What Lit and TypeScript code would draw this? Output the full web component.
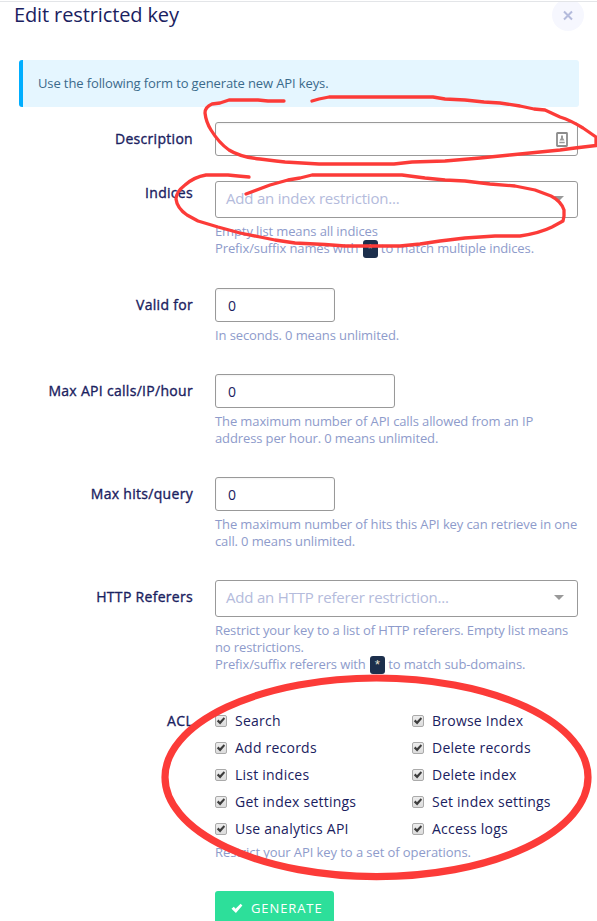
import { LitElement, html, css, svg, nothing } from "lit";
import { customElement } from "lit/decorators.js";

const PERMISSIONS = [
  "Search", "Browse Index",
  "Add records", "Delete records",
  "List indices", "Delete index",
  "Get index settings", "Set index settings",
  "Use analytics API", "Access logs",
];

const tick = svg`<path d="M1 5.2 3.1 3.3 4.7 5.2 9.3 0.6 10.9 2.2 5 9.2Z"></path>`;

@customElement("app-root")
export class AppRoot extends LitElement {
  static styles = css`
    :host {
      display: block;
      position: relative;
      width: 597px;
      height: 921px;
      overflow: hidden;
      background: #fff;
      color: #1a2160;
      font: 14px/20px "Open Sans", "Noto Sans", sans-serif;
    }
    * { box-sizing: border-box; }
    .sheet { margin-top: 1px; border-top: 1px solid #e3e5e8; }
    header {
      height: 58px;
      display: flex;
      justify-content: space-between;
      align-items: flex-start;
      padding: 0 13px 0 14px;
    }
    h1 { margin: 0; font-size: 20px; letter-spacing: -0.12px; line-height: 26px; font-weight: 400; white-space: nowrap; }
    .close { width: 32px; height: 29px; display: block; }
    .info {
      margin: 0 18px 15px 19px;
      height: 47px;
      padding-left: 15px;
      border-left: 4px solid #00aeff;
      border-radius: 3px;
      background: #e5f6ff;
      color: #3b6a8b;
      font-size: 13px;
      letter-spacing: -0.12px;
      line-height: 47px;
      white-space: nowrap;
    }
    .row { display: grid; grid-template-columns: 193px 363px; column-gap: 22px; white-space: nowrap; }
    .label {
      text-align: right;
      letter-spacing: 0.3px;
      -webkit-text-stroke: 0.35px currentColor;
      height: 20px;
      margin-top: 7px;
    }
    .label.high { margin-top: 2px; }
    .label.low { margin-top: 4px; }
    .description { height: 59px; }
    .indices { height: 107px; }
    .valid { height: 86px; }
    .calls, .hits { height: 103px; }
    .referers { height: 127px; }
    .acl { height: 184px; }
    .input {
      height: 34px;
      border: 1px solid #999;
      border-radius: 3px;
      padding: 1px 12px 0;
      display: flex;
      align-items: center;
      box-shadow: inset 0 1px 2px #0000000d;
    }
    .small { width: 120px; }
    .medium { width: 180px; }
    .full { padding: 0 9px 0 12px; justify-content: flex-end; }
    .select {
      height: 37px;
      border: 1px solid #999;
      border-radius: 3px;
      padding: 0 13px 3px 10px;
      display: flex;
      align-items: center;
      justify-content: space-between;
      color: #b4bbdc;
      font-size: 15px;
      letter-spacing: -0.2px;
    }
    .hint { color: #8e9bcb; font-size: 13px; letter-spacing: -0.115px; line-height: 17px; margin-top: 5px; }
    code {
      display: inline-block;
      width: 15px; height: 18px;
      margin: 0 0 -1px 1px;
      border-radius: 3px;
      background: #1c2f4c;
      color: #e8e4d0;
      font: 13px/20px "Liberation Mono", monospace;
      text-align: center;
      vertical-align: top;
    }
    .options { display: grid; grid-template-columns: 197px 1fr; grid-auto-rows: 27px; letter-spacing: 0.23px; }
    .option { display: flex; align-items: center; gap: 8px; }
    .box {
      width: 12px; height: 12px;
      border: 1px solid #aaa;
      border-radius: 2px;
      background: linear-gradient(#ededed, #dcdcdc);
      display: flex;
    }
    .box svg { width: 10px; height: 10px; fill: #3d3d3d; }
    .acl .hint { margin-top: 2px; letter-spacing: -0.08px; }
    .button {
      margin-left: 215px;
      width: 119px; height: 36px;
      border-radius: 3px;
      background: #2ddf9a;
      color: #fff;
      display: flex;
      align-items: center;
      padding: 0 0 2px 15px;
      gap: 7px;
      font-size: 13px;
      letter-spacing: 0.9px;
    }
    .button svg { width: 14px; height: 11px; fill: #fff; }
    .marks { position: absolute; inset: 0; fill: none; stroke: #fc3b38; pointer-events: none; }
  `;

  private row(kind: string, label: string, control: unknown, hint: unknown = nothing, align = "") {
    return html`<div class="row ${kind}">
      <div class="label ${align}">${label}</div>
      <div>${control}${hint === nothing ? nothing : html`<div class="hint">${hint}</div>`}</div>
    </div>`;
  }

  private select(text: string) {
    return html`<div class="select"><span>${text}</span>
      <svg width="10" height="5"><path d="M0 0H10L5 5Z" fill="#999"></path></svg></div>`;
  }

  render() {
    return html`
      <div class="sheet">
        <header>
          <h1>Edit restricted key</h1>
          <svg class="close" viewBox="0 0 32 29">
            <circle cx="16" cy="13" r="16" fill="#f6f7fe"></circle>
            <path d="M12 9.5 20 17.5M20 9.5 12 17.5" stroke="#b4bbdc" stroke-width="2"></path>
          </svg>
        </header>
        <div class="info">Use the following form to generate new API keys.</div>
        ${this.row("description", "Description", html`<div class="input full">
          <svg width="12" height="15" viewBox="0 0 12 15">
            <rect x="1" y="1" width="10" height="13" rx="0.5" fill="#fff" stroke="#8c8c8c" stroke-width="1.8"></rect>
            <path d="M5 3.5H7V6L8.500 8.500H3.500L5 6ZM3.300 9.700H8.700V11.300H3.300Z" fill="#999"></path>
          </svg></div>`)}
        ${this.row("indices", "Indices", this.select("Add an index restriction..."),
          html`Empty list means all indices<br>Prefix/suffix names with <code>*</code> to match multiple indices.`, "high")}
        ${this.row("valid", "Valid for", html`<div class="input small">0</div>`, "In seconds. 0 means unlimited.")}
        ${this.row("calls", "Max API calls/IP/hour", html`<div class="input medium">0</div>`,
          html`The maximum number of API calls allowed from an IP<br>address per hour. 0 means unlimited.`)}
        ${this.row("hits", "Max hits/query", html`<div class="input small">0</div>`,
          html`The maximum number of hits this API key can retrieve in one<br>call. 0 means unlimited.`)}
        ${this.row("referers", "HTTP Referers", this.select("Add an HTTP referer restriction..."),
          html`Restrict your key to a list of HTTP referers. Empty list means<br>no restrictions.<br>Prefix/suffix referers with <code>*</code> to match sub-domains.`)}
        ${this.row("acl", "ACL", html`<div class="options">${PERMISSIONS.map((name) => html`
          <div class="option"><span class="box"><svg viewBox="0 0 12 10">${tick}</svg></span>${name}</div>`)}</div>`,
          "Restrict your API key to a set of operations.", "low")}
        <div class="button"><svg viewBox="0 0 12 10">${tick}</svg>GENERATE</div>
      </div>
      <svg class="marks" width="597" height="921" viewBox="0 0 597 921" stroke-width="3.3" stroke-linecap="round" stroke-linejoin="round">
        <path d="M284 101H268L258 100H229L220 103 212 104Q205 107 205 113 206 122 211 130 219 143 229 150 240 157 260 159L276 161 285 162 319 164H394L412 162 445 161 480 158 510 155 530 153 560 150 575 148 596 145.500V137L583 128Q570 120 560 117L545 110 534 109 520 106 500 103 484 102 465 100 445 99 433 97H329L319 99 312 101"></path>
        <path d="M249 177 238 176 228 175H206Q194 177 185 185 176 192 176 199 177 208 187 215L198 221 218 227 240 233 260 237 275 240 295 243 325 244.500 345 246H400L420 244 440 241 465 238 495 236H520Q540 233 552 227L563 221 564 216V210Q561 201 551 196L535 190 515 186 490 184 465 181 445 180 425 178 402 175H312L300 178 288 180 270 185 246 194"></path>
        <ellipse cx="376.500" cy="777.300" rx="211.500" ry="99.300" stroke-width="7.200"></ellipse>
      </svg>`;
  }
}
